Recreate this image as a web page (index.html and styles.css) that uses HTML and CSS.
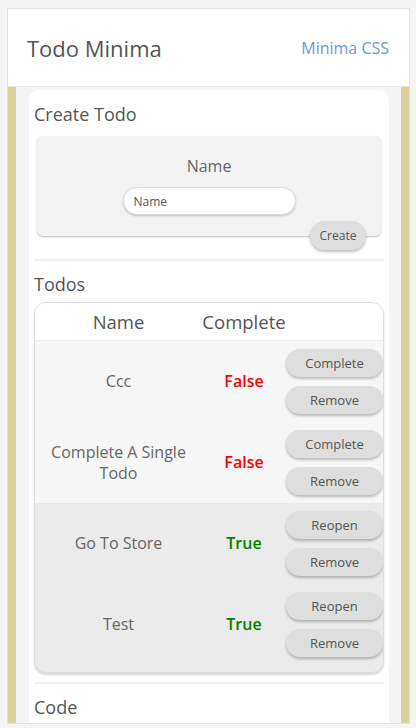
FILE: index.html
```html
<!DOCTYPE html>
<html>
<head>
<meta charset="utf-8">
<link rel="stylesheet" href="styles.css">
</head>
<body>
<div class="frame">
  <header class="topbar">
    <h1 class="brand">Todo Minima</h1>
    <a class="brand-link" href="#">Minima CSS</a>
  </header>
  <div class="rail">
    <div class="well">
      <main class="card">
        <h2 class="section-title">Create Todo</h2>
        <form class="create-form">
          <label class="field-label" for="name">Name</label>
          <input class="field-input" id="name" type="text" placeholder="Name">
          <div class="form-actions">
            <button type="button" class="btn btn-create">Create</button>
          </div>
        </form>
        <hr class="divider">
        <h2 class="section-title">Todos</h2>
        <div class="todo-table">
          <div class="thead">
            <div class="th">Name</div>
            <div class="th">Complete</div>
            <div class="th"></div>
          </div>
          <div class="row">
            <div class="cell name">Ccc</div>
            <div class="cell status false">False</div>
            <div class="cell actions"><button class="btn">Complete</button><button class="btn">Remove</button></div>
          </div>
          <div class="row">
            <div class="cell name">Complete A Single Todo</div>
            <div class="cell status false">False</div>
            <div class="cell actions"><button class="btn">Complete</button><button class="btn">Remove</button></div>
          </div>
          <div class="row done">
            <div class="cell name">Go To Store</div>
            <div class="cell status true">True</div>
            <div class="cell actions"><button class="btn">Reopen</button><button class="btn">Remove</button></div>
          </div>
          <div class="row done">
            <div class="cell name">Test</div>
            <div class="cell status true">True</div>
            <div class="cell actions"><button class="btn">Reopen</button><button class="btn">Remove</button></div>
          </div>
        </div>
        <hr class="divider divider-after">
        <h2 class="section-title">Code</h2>
      </main>
    </div>
  </div>
</div>
</body>
</html>
```

FILE: styles.css
```css
* { box-sizing: border-box; }
html, body { margin: 0; padding: 0; }
body {
  background: #f5f5f5;
  font-family: "Open Sans", "Noto Sans", sans-serif;
  color: #555;
}
.frame {
  margin: 8px 6px 0 7px;
  height: 716px;
  border: 1px solid #e2e2e2;
  background: #fff;
  display: flex;
  flex-direction: column;
  overflow: hidden;
}
.topbar {
  height: 78px;
  flex: none;
  display: flex;
  align-items: center;
  justify-content: space-between;
  padding: 0 20px 0 19px;
  background: #fff;
  border-bottom: 1px solid #e4e4e4;
}
.brand {
  margin: 0;
  font-size: 22px;
  font-weight: 400;
  color: #555;
}
.brand-link {
  font-size: 16px;
  color: #6d97e0;
  text-decoration: none;
}
.rail {
  flex: 1;
  background: #d9d09a;
  padding: 0 8px;
  min-height: 0;
}
.well {
  height: 100%;
  background: #f5f5f5;
  padding: 3px 12px 0 13px;
  overflow: hidden;
}
.card {
  background: #fff;
  border-radius: 10px 10px 0 0;
  padding: 7px 5px 20px 5px;
}
.section-title {
  margin: 0;
  font-size: 18px;
  font-weight: 400;
  color: #555;
  line-height: 34px;
}
.create-form {
  margin: 5px 3px 0 3px;
  background: #f3f3f3;
  border-radius: 6px;
  box-shadow: 0 1px 2px rgba(0,0,0,0.25);
  display: flex;
  flex-direction: column;
  align-items: center;
  padding: 18px 0 0 0;
}
.field-label {
  font-size: 16px;
  color: #666;
  line-height: 24px;
}
.field-input {
  margin-top: 9px;
  width: 173px;
  height: 28px;
  border: 1px solid #ddd;
  border-radius: 14px;
  background: #fff;
  box-shadow: 0 1px 2px rgba(0,0,0,0.2);
  padding: 0 10px;
  font-family: inherit;
  font-size: 12px;
  color: #555;
  outline: none;
}
.field-input::placeholder { color: #555; }
.form-actions {
  align-self: stretch;
  display: flex;
  justify-content: flex-end;
  padding-right: 15px;
  margin-top: 6px;
  margin-bottom: -14px;
}
.btn {
  font-family: inherit;
  font-size: 13px;
  color: #555;
  background: #dedede;
  border: none;
  border-radius: 15px;
  height: 28px;
  box-shadow: 0 2px 3px rgba(0,0,0,0.25);
  padding: 0;
  cursor: pointer;
}
.btn-create {
  width: 56px;
  height: 29px;
  font-size: 12px;
}
.divider {
  border: none;
  height: 2px;
  background: #f0f0f0;
  margin: 23px 0 6px 0;
}
.divider-after { margin-top: 9px; }
.todo-table {
  margin-top: 1px;
  border: 1px solid #ddd;
  border-radius: 12px;
  overflow: hidden;
  background: #ebebeb;
  padding-bottom: 7px;
  box-shadow: 0 2px 2px rgba(0,0,0,0.15);
}
.thead, .row {
  display: grid;
  grid-template-columns: 167px 84px 1fr;
}
.thead {
  height: 38px;
  align-items: center;
  background: #fff;
  border-bottom: 1px solid #eee;
}
.th {
  text-align: center;
  font-size: 18.5px;
  color: #555;
}
.row {
  background: #f7f7f7;
  height: 81px;
  align-items: center;
}
.row.done { background: #ebebeb; }
.cell {
  text-align: center;
  font-size: 16px;
  line-height: 21px;
  color: #666;
}
.name { padding: 0 10px; }
.status { font-weight: 600; font-size: 16px; }
.status.false { color: #f00; }
.status.true { color: #008000; }
.actions {
  display: flex;
  flex-direction: column;
  gap: 9px;
  align-self: stretch;
  justify-content: center;
}
.actions .btn { width: 97px; }
```
